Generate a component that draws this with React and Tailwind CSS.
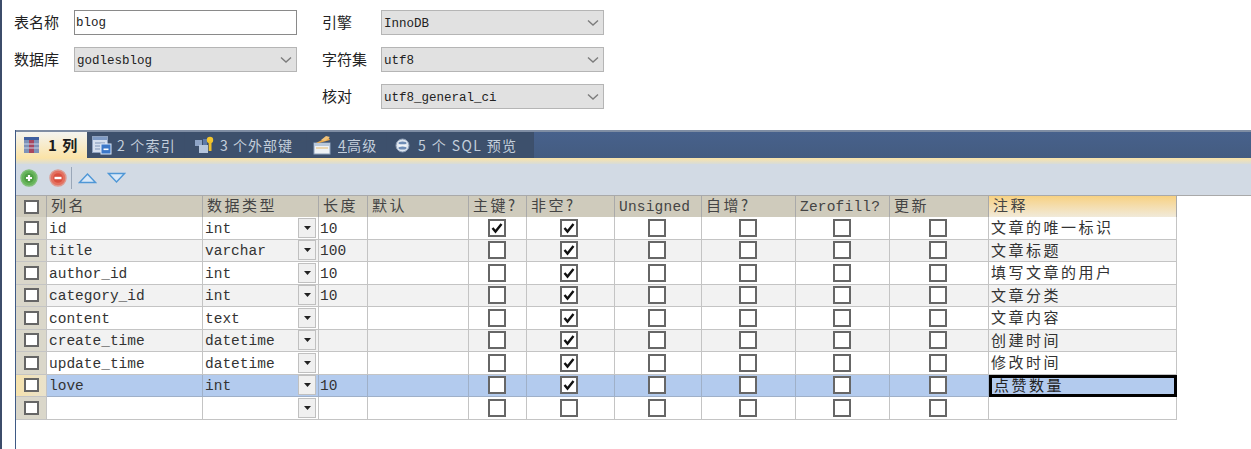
const rows = [
  { name: "id", type: "int", len: "10", pk: true, nn: true, note: "文章的唯一标识" },
  { name: "title", type: "varchar", len: "100", pk: false, nn: true, note: "文章标题" },
  { name: "author_id", type: "int", len: "10", pk: false, nn: true, note: "填写文章的用户" },
  { name: "category_id", type: "int", len: "10", pk: false, nn: true, note: "文章分类" },
  { name: "content", type: "text", len: "", pk: false, nn: true, note: "文章内容" },
  { name: "create_time", type: "datetime", len: "", pk: false, nn: true, note: "创建时间" },
  { name: "update_time", type: "datetime", len: "", pk: false, nn: true, note: "修改时间" },
  { name: "love", type: "int", len: "10", pk: false, nn: true, note: "点赞数量", selected: true },
  { name: "", type: "", len: "", pk: false, nn: false, note: "" },
];

const mono = "font-['Liberation_Mono','Noto_Sans_CJK_SC',monospace]";
const cjk = "font-['Noto_Sans_CJK_SC','Liberation_Sans',sans-serif]";
const cols = "grid grid-cols-[31px_156px_116px_49px_101px_58px_88px_87px_94px_94px_99px_188px]";

function Chevron() {
  return (
    <svg width="14" height="8" viewBox="0 0 14 8" className="shrink-0">
      <path d="M2 1.5 L7 6 L12 1.5" fill="none" stroke="#7c7c7c" strokeWidth="1.4" />
    </svg>
  );
}

function Field({ value }) {
  return (
    <div className={`flex h-[25px] items-center justify-between border border-[#b5b5b5] bg-[#e1e1e1] pl-[2px] pr-[3px] text-[12.5px] text-[#222] ${mono}`}>
      <span className="pt-[3px]">{value}</span>
      <Chevron />
    </div>
  );
}

function Label({ children }) {
  return <div className={`flex h-[25px] items-center text-[15px] text-[#222] ${cjk}`}>{children}</div>;
}

function Box({ checked, small }) {
  return (
    <span className={`relative inline-block shrink-0 border-2 border-[#666] bg-white ${small ? "h-[14px] w-[15px]" : "h-[18px] w-[18px]"}`}>
      {checked && (
        <svg width="14" height="14" viewBox="0 0 14 14" className="absolute left-0 top-0">
          <path d="M2.5 7 L5.5 10.5 L11.5 3" fill="none" stroke="#111" strokeWidth="2.4" />
        </svg>
      )}
    </span>
  );
}

function TableIcon() {
  return (
    <svg width="15" height="16" viewBox="0 0 15 16">
      <rect x="0" y="0" width="15" height="16" fill="#7e92b8" />
      <rect x="0" y="0" width="15" height="3" fill="#3f5f9f" />
      <rect x="5" y="3" width="5" height="13" fill="#a8475e" />
      <path d="M0 7H15M0 11H15" stroke="#c9d3e6" strokeWidth="1" />
    </svg>
  );
}
function IndexIcon() {
  return (
    <svg width="20" height="19" viewBox="0 0 20 19">
      <rect x="0.5" y="0.5" width="15" height="16" fill="#d5dfee" stroke="#90a3c0" />
      <rect x="1" y="1" width="14" height="3" fill="#7f9bc5" />
      <path d="M3 7H13M3 10H8M3 13H8" stroke="#7d93b5" />
      <rect x="9" y="8" width="10" height="10" fill="#3c78c8" stroke="#dbe7f7" />
      <rect x="11.5" y="12.5" width="5" height="1.6" fill="#fff" />
    </svg>
  );
}
function FkIcon() {
  return (
    <svg width="20" height="19" viewBox="0 0 20 19">
      <rect x="0" y="4" width="7" height="6" fill="#8ea4c6" />
      <rect x="4" y="9" width="9" height="8" fill="#b6c6dc" />
      <rect x="8" y="3" width="4" height="6" fill="#5d7aa8" />
      <circle cx="15" cy="4" r="3.2" fill="#f3c62e" />
      <rect x="13.7" y="5" width="2.8" height="10" fill="#efc02a" />
    </svg>
  );
}
function AdvIcon() {
  return (
    <svg width="19" height="20" viewBox="0 0 19 20">
      <rect x="1" y="8" width="16" height="11" fill="#eef2f6" stroke="#8fa2bb" />
      <rect x="1" y="8" width="16" height="3" fill="#b9c8da" />
      <path d="M3 13H15" stroke="#e8b968" />
      <path d="M3 8 L15 2 L17 5 L6 8 Z" fill="#e9a94c" />
      <path d="M8 5 L13 1 L17 2 L12 6 Z" fill="#f0c27a" />
    </svg>
  );
}
function SqlIcon() {
  return (
    <svg width="15" height="15" viewBox="0 0 15 15">
      <circle cx="7.5" cy="7.5" r="6.5" fill="#dfe6ef" stroke="#8fa0b8" />
      <ellipse cx="7.5" cy="5" rx="4" ry="1.6" fill="#6f8db6" />
      <rect x="3.5" y="6.5" width="8" height="2" fill="#f4f6f9" />
      <ellipse cx="7.5" cy="10" rx="4" ry="1.5" fill="#6f8db6" />
    </svg>
  );
}

function RoundBtn({ green }) {
  return (
    <svg width="18" height="18" viewBox="0 0 18 18">
      <circle cx="9" cy="9" r="8" fill={green ? "#66b45a" : "#e4705f"} stroke={green ? "#7fbf78" : "#dd9a90"} strokeWidth="1.4" />
      <circle cx="9" cy="9" r="4.8" fill={green ? "#4f9e45" : "#d9503f"} />
      {green ? <path d="M6 9H12M9 6V12" stroke="#fff" strokeWidth="2.2" /> : <path d="M5.5 9H12.5" stroke="#fff" strokeWidth="2.4" />}
    </svg>
  );
}
function Arrow({ up }) {
  return (
    <svg width="19" height="12" viewBox="0 0 19 12">
      {up ? (
        <path d="M1.5 10.5 L9.5 2 L17.5 10.5 Z" fill="#d9e8f8" stroke="#4f97d6" strokeWidth="1.4" />
      ) : (
        <path d="M1.5 1.5 L17.5 1.5 L9.5 10 Z" fill="#d9e8f8" stroke="#4f97d6" strokeWidth="1.4" />
      )}
    </svg>
  );
}

function Tab({ icon, label, width, active, gap, track }) {
  return (
    <div
      className={`flex h-full shrink-0 items-center ${cjk} ${
        active
          ? "bg-gradient-to-b from-[#f4f4f0] to-[#fbe3a6] text-[15px] font-bold tracking-[1px] text-[#1c1c1c]"
          : `border-r border-[#3d4f6b] bg-[#3d506c] text-[14px] text-[#c3cedb] ${track}`
      } ${width} ${gap}`}
    >
      {icon}
      <span>{label}</span>
    </div>
  );
}

function HeadCell({ children, hot, useMono }) {
  return (
    <div
      className={`flex h-[21px] items-center border-r border-[#a9a9a9] pl-[4px] leading-none text-[#444] ${
        useMono ? `pt-[2px] text-[14.5px] tracking-[0.2px] ${mono}` : `pb-[4px] text-[15px] tracking-[2.5px] ${cjk}`
      } ${hot ? "bg-gradient-to-b from-[#f7d181] to-[#f1ead9]" : "bg-[#cfcbbc]"}`}
    >
      {children}
    </div>
  );
}

function Row({ r, index }) {
  const bg = r.selected ? "bg-[#b3cbee]" : index % 2 === 1 ? "bg-[#f2f2f2]" : "bg-white";
  const line = r.selected ? "border-[#9fb0c8]" : "border-[#c4c4c4]";
  const cell = `flex items-center border-b border-r ${line} ${bg}`;
  const text = `pt-[2px] text-[14.5px] leading-none text-[#333] ${mono}`;
  return (
    <div className={`${cols} h-[22.5px] grid-rows-[22.5px]`}>
      <div className={`flex items-center justify-center border-b border-r border-[#c4c4c4] ${r.selected ? "bg-gradient-to-r from-[#f6e2ac] to-[#e9e2cc]" : "bg-[#dad7ca]"}`}>
        <Box small />
      </div>
      <div className={`${cell} pl-[2px] ${text}`}>{r.name}</div>
      <div className={`${cell} justify-between pl-[2px] pr-[2px] ${text}`}>
        <span>{r.type}</span>
        <span className="-mt-[2px] flex h-[20px] w-[18px] items-center justify-center border border-[#c0c0c0] bg-[#f0f0f0]">
          <svg width="7" height="4" viewBox="0 0 7 4"><path d="M0 0H7L3.5 4Z" fill="#222" /></svg>
        </span>
      </div>
      <div className={`${cell} pl-[1px] ${text}`}>{r.len}</div>
      <div className={cell} />
      <div className={`${cell} justify-center pr-[2px]`}><Box checked={r.pk} /></div>
      <div className={`${cell} justify-center pr-[4px]`}><Box checked={r.nn} /></div>
      <div className={`${cell} justify-center pr-[2px]`}><Box /></div>
      <div className={`${cell} justify-center pr-[2px]`}><Box /></div>
      <div className={`${cell} justify-center pr-[2px]`}><Box /></div>
      <div className={`${cell} justify-center pr-[2px]`}><Box /></div>
      <div
        className={`flex items-center pb-[2px] pl-[2px] text-[15px] leading-none tracking-[2.5px] ${cjk} ${
          r.selected ? "border-[3px] border-black bg-[#b3cbee] pl-[1px] text-[#222]" : `border-b border-r border-[#c4c4c4] text-[#333] ${bg}`
        }`}
      >
        {r.note}
      </div>
    </div>
  );
}

export default function App() {
  return (
    <div className="flex h-[449px] w-[1251px] flex-col overflow-hidden border-l-2 border-[#3c4c6a] bg-white">
      <div className="grid grid-cols-[60px_223px_25px_59px_223px] grid-rows-[25px_25px_25px] gap-y-[12px] pl-[12px] pt-[10px]">
        <Label>表名称</Label>
        <div className={`flex h-[25px] items-center border border-[#8a8a8a] bg-white pl-[1px] pt-[2px] text-[12.5px] text-[#222] ${mono}`}>blog</div>
        <div />
        <Label>引擎</Label>
        <Field value="InnoDB" />
        <Label>数据库</Label>
        <Field value="godlesblog" />
        <div />
        <Label>字符集</Label>
        <Field value="utf8" />
        <div />
        <div />
        <div />
        <Label>核对</Label>
        <Field value="utf8_general_ci" />
      </div>

      <div className="ml-[13px] mt-[21px] flex min-h-0 flex-1 flex-col border-l border-[#3f5a85]">
        <div className="flex h-[28px] border-t-2 border-[#7f8da3] bg-gradient-to-b from-[#47618c] to-[#445c80]">
          <Tab active width="w-[71px]" gap="gap-[9px] pl-[8px]" icon={<TableIcon />} label="1 列" />
          <Tab width="w-[98px]" track="tracking-[1.2px]" gap="gap-[5px] pl-[5px]" icon={<IndexIcon />} label="2 个索引" />
          <Tab width="w-[122px]" track="tracking-[1px]" gap="gap-[5px] pl-[10px]" icon={<FkIcon />} label="3 个外部键" />
          <Tab width="w-[80px]" track="tracking-[1.2px]" gap="gap-[6px] pl-[6px]" icon={<AdvIcon />} label={<><span className="underline">4</span>高级</>} />
          <Tab width="w-[147px]" track="tracking-[1.4px]" gap="gap-[8px] pl-[8px]" icon={<SqlIcon />} label="5 个 SQL 预览" />
        </div>
        <div className="h-[6px] bg-gradient-to-b from-[#fbe3a6] to-[#d8dcd8]" />
        <div className="flex h-[31px] items-center bg-[#d2dae4] pb-[3px] pl-[4px]">
          <RoundBtn green />
          <span className="ml-[11px]"><RoundBtn /></span>
          <span className="ml-[4px] h-[22px] w-px bg-[#9aa7b8]" />
          <span className="ml-[6px]"><Arrow up /></span>
          <span className="ml-[10px]"><Arrow /></span>
        </div>

        <div className={`${cols} border-t border-[#a9a9a9]`}>
          <div className="flex h-[21px] items-center justify-center border-r border-[#a9a9a9] bg-[#cfcbbc]"><Box small /></div>
          <HeadCell>列名</HeadCell>
          <HeadCell>数据类型</HeadCell>
          <HeadCell>长度</HeadCell>
          <HeadCell>默认</HeadCell>
          <HeadCell>主键?</HeadCell>
          <HeadCell>非空?</HeadCell>
          <HeadCell useMono>Unsigned</HeadCell>
          <HeadCell>自增?</HeadCell>
          <HeadCell useMono>Zerofill?</HeadCell>
          <HeadCell>更新</HeadCell>
          <HeadCell hot>注释</HeadCell>
        </div>
        {rows.map((r, i) => (
          <Row key={i} r={r} index={i} />
        ))}
      </div>
    </div>
  );
}
